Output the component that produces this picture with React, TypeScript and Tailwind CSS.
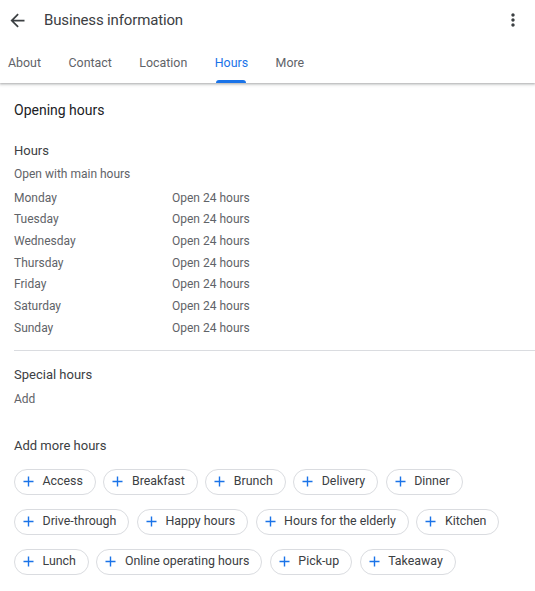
import React from "react";

const days = ["Monday", "Tuesday", "Wednesday", "Thursday", "Friday", "Saturday", "Sunday"];
const chips = [
  "Access",
  "Breakfast",
  "Brunch",
  "Delivery",
  "Dinner",
  "Drive-through",
  "Happy hours",
  "Hours for the elderly",
  "Kitchen",
  "Lunch",
  "Online operating hours",
  "Pick-up",
  "Takeaway",
];
const tabs = ["About", "Contact", "Location", "Hours", "More"];

function Plus() {
  return (
    <svg width="11" height="11" viewBox="0 0 11 11" className="shrink-0">
      <path d="M5.5 0.5v10M0.5 5.5h10" stroke="#1a73e8" strokeWidth="1.4" fill="none" />
    </svg>
  );
}

export default function App() {
  return (
    <div
      className="w-[535px] h-[591px] bg-white overflow-hidden"
      style={{ fontFamily: "Roboto, 'Noto Sans', Arial, sans-serif" }}
    >
      <div className="relative z-10 bg-white shadow-[0_1px_2px_rgba(60,64,67,0.3),0_1px_3px_1px_rgba(60,64,67,0.15)]">
        <div className="h-[40px] flex items-center">
          <svg width="21" height="21" viewBox="0 0 24 24" className="ml-[7px]">
            <path
              d="M20 11H7.83l5.59-5.59L12 4l-8 8 8 8 1.41-1.41L7.83 13H20v-2z"
              fill="#3c4043"
            />
          </svg>
          <div className="ml-[16px] pt-[1px] text-[15px] tracking-[-0.15px] text-[#3c4043]">Business information</div>
          <div className="flex-1" />
          <svg width="20" height="20" viewBox="0 0 24 24" className="mr-[12px]">
            <path
              d="M12 8c1.1 0 2-.9 2-2s-.9-2-2-2-2 .9-2 2 .9 2 2 2zm0 2c-1.1 0-2 .9-2 2s.9 2 2 2 2-.9 2-2-.9-2-2-2zm0 6c-1.1 0-2 .9-2 2s.9 2 2 2 2-.9 2-2-.9-2-2-2z"
              fill="#3c4043"
            />
          </svg>
        </div>
        <div className="h-[43px] flex pl-[8px] gap-[27.5px]">
          {tabs.map((t) => (
            <div
              key={t}
              className={
                "relative flex items-center pt-[3px] text-[12.4px] " +
                (t === "Hours" ? "text-[#1a73e8]" : "text-[#5f6368]")
              }
            >
              {t}
              {t === "Hours" && (
                <div className="absolute bottom-0 left-[1px] right-[2px] h-[3px] rounded-t-[3px] bg-[#1a73e8]" />
              )}
            </div>
          ))}
        </div>
      </div>

      <div className="pl-[14px]">
        <div className="mt-[17px] text-[14px] leading-[20px] text-[#202124]">Opening hours</div>
        <div className="mt-[21px] text-[13px] leading-[20px] text-[#3c4043]">Hours</div>
        <div className="mt-[3px] text-[12px] leading-[20px] text-[#5f6368]">Open with main hours</div>
        <div className="mt-[3px]">
          {days.map((d) => (
            <div key={d} className="flex h-[21.67px] items-center text-[12px] text-[#5f6368]">
              <div className="w-[158px]">{d}</div>
              <div>Open 24 hours</div>
            </div>
          ))}
        </div>
        <div className="mt-[11px] h-px bg-[#dadce0]" />
        <div className="mt-[14px] text-[13px] leading-[20px] text-[#3c4043]">Special hours</div>
        <div className="mt-[4px] text-[12px] leading-[20px] text-[#5f6368]">Add</div>
        <div className="mt-[27px] text-[13px] leading-[20px] text-[#3c4043]">Add more hours</div>
        <div className="mt-[13px] flex flex-wrap gap-x-[7.5px] gap-y-[14px]">
          {chips.map((c) => (
            <div
              key={c}
              className="h-[26px] flex items-center rounded-full border border-[#dadce0] pl-[8px] pr-[12px] text-[12.4px] text-[#3c4043]"
            >
              <Plus />
              <span className="ml-[8.5px] whitespace-nowrap">{c}</span>
            </div>
          ))}
        </div>
      </div>
    </div>
  );
}
